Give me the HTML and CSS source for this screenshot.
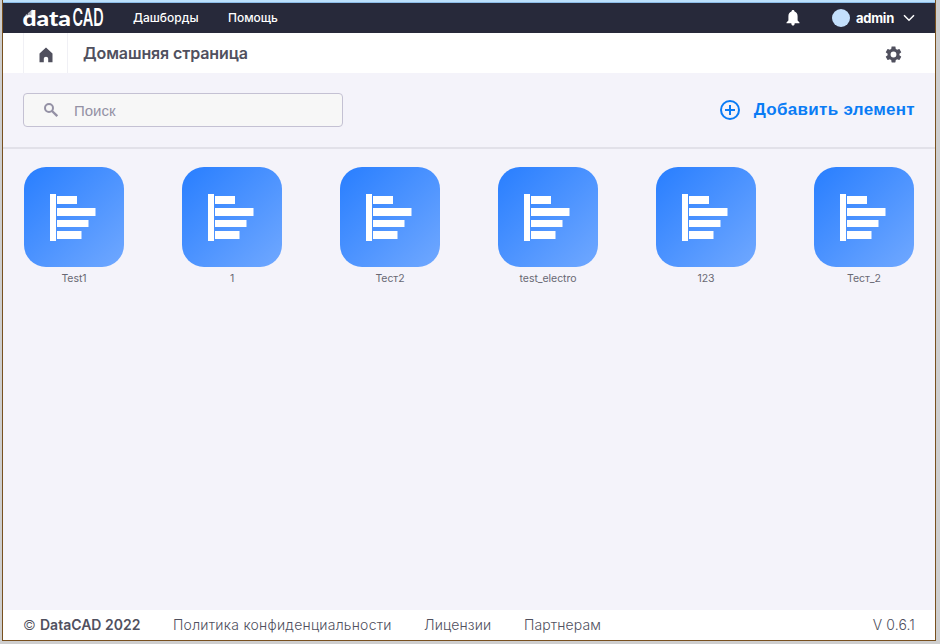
FILE: index.html
```html
<!DOCTYPE html>
<html lang="ru">
<head>
<meta charset="utf-8">
<title>DataCAD</title>
<link rel="stylesheet" href="styles.css">
</head>
<body>
<svg width="0" height="0" class="defs">
  <symbol id="chart" viewBox="0 0 100 100">
    <path fill="#fff" d="M26 27h6v47h-6zM33 29h20v8H33zM33 41h38.500v8H33zM33 53h31.500v7H33zM33 64h24.500v8H33z"/>
  </symbol>
</svg>
<div class="window">
  <div class="strip"></div>
  <header class="topbar">
    <svg class="logo" width="84" height="24" viewBox="0 0 84 24">
      <path d="M2.500 9 4.500 7.500V11h-2zM5 7 7 5.500V10H5z" fill="#a9abb5"/>
      <path d="M7.200 5.200 9.500 3.500V10H7.200z" fill="#d5d6dc"/>
      <text class="logo-data" x="-.5" y="19.500" textLength="48.500" lengthAdjust="spacingAndGlyphs">data</text>
      <text class="logo-cad" transform="translate(49.500 19.500) scale(.52 1)" textLength="60" lengthAdjust="spacingAndGlyphs">CAD</text>
    </svg>
    <nav class="nav"><a class="nav-dash">Дашборды</a><a class="nav-help">Помощь</a></nav>
    <div class="user">
      <svg class="bell" width="14" height="16" viewBox="0 0 14 16"><path fill="#fff" d="M7 0c1 0 1.500.7 1.500 1.600C10.600 2.200 11.600 4 11.600 6.200V10.500L13.500 12.500V13.300H.5V12.500L2.400 10.500V6.200C2.400 4 3.400 2.200 5.500 1.600 5.500.7 6 0 7 0ZM5.300 13.300H8.700C8.700 14.900 8 15.600 7 15.600S5.300 14.900 5.300 13.300Z"/></svg>
      <span class="avatar"></span>
      <span class="username">admin</span>
      <svg class="chevron" width="12" height="8" viewBox="0 0 12 8"><path d="M1 1.200 6 6.200 11 1.200" fill="none" stroke="#fff" stroke-width="1.500"/></svg>
    </div>
  </header>
  <div class="titlebar">
    <a class="home"><svg width="14" height="16" viewBox="0 0 14 16"><path fill="#50505e" d="M7 .5 13.500 6.500V15.200H9.200V11.500Q9.200 9.800 7 9.800T4.800 11.500V15.200H.5V6.500Z"/></svg></a>
    <h1 class="title">Домашняя страница</h1>
    <svg class="gear" width="19" height="19" viewBox="0 0 24 24"><path fill="#50505e" d="M19.430 12.980c.04-.32.070-.64.070-.98s-.03-.66-.07-.98l2.110-1.650c.19-.15.240-.42.120-.64l-2-3.460c-.12-.22-.39-.3-.61-.22l-2.490 1c-.52-.4-1.080-.73-1.690-.98l-.38-2.650C14.460 2.180 14.250 2 14 2h-4c-.25 0-.46.180-.49.420l-.38 2.650c-.61.250-1.170.590-1.690.98l-2.490-1c-.23-.09-.49 0-.61.220l-2 3.460c-.13.220-.07.490.12.640l2.110 1.650c-.04.320-.07.650-.07.980s.03.660.07.980l-2.110 1.650c-.19.150-.24.420-.12.640l2 3.460c.12.220.39.300.61.220l2.490-1c.52.400 1.080.730 1.690.980l.38 2.650c.03.240.24.420.49.420h4c.25 0 .46-.18.490-.42l.38-2.650c.61-.25 1.170-.59 1.690-.98l2.490 1c.23.090.49 0 .61-.22l2-3.460c.12-.22.070-.49-.12-.64zM12 15.700A3.700 3.700 0 1 1 12 8.300a3.700 3.700 0 0 1 0 7.400z"/></svg>
  </div>
  <div class="tools">
    <label class="search">
      <svg width="16" height="16" viewBox="0 0 16 16"><circle cx="6" cy="6" r="4" fill="none" stroke="#9491a5" stroke-width="2"/><path d="M9 9 14.300 14.200" stroke="#9491a5" stroke-width="2.400"/></svg>
      <input class="search-input" placeholder="Поиск">
    </label>
    <a class="add"><svg width="22" height="22" viewBox="0 0 22 22"><g fill="none" stroke="#0a7cf5" stroke-width="2"><circle cx="11" cy="11" r="9"/><path d="M11 6v10M6 11h10"/></g></svg><span>Добавить элемент</span></a>
  </div>
  <main class="grid">
    <a class="item"><svg class="tile"><use href="#chart"/></svg><span class="label">Test1</span></a>
    <a class="item"><svg class="tile"><use href="#chart"/></svg><span class="label">1</span></a>
    <a class="item"><svg class="tile"><use href="#chart"/></svg><span class="label">Тест2</span></a>
    <a class="item"><svg class="tile"><use href="#chart"/></svg><span class="label">test_electro</span></a>
    <a class="item"><svg class="tile"><use href="#chart"/></svg><span class="label">123</span></a>
    <a class="item"><svg class="tile"><use href="#chart"/></svg><span class="label">Тест_2</span></a>
  </main>
  <footer class="footer">
    <span class="copy">© <b>DataCAD 2022</b></span>
    <a class="policy">Политика конфиденциальности</a>
    <a class="licenses">Лицензии</a>
    <a class="partners">Партнерам</a>
    <span class="version">V 0.6.1</span>
  </footer>
</div>
</body>
</html>
```
FILE: styles.css
```css
* { box-sizing: border-box; }
body { margin: 0; height: 644px; overflow: hidden; background: #cecece; font-family: Inter, "Open Sans", sans-serif; color: #50505e; }
.defs { display: block; }
.window { width: 934px; height: 641px; margin-left: 2px; border: 1px solid #78501e; border-top: 0; background: #f4f3fa; display: flex; flex-direction: column; }
.strip { height: 3px; flex: none; background: #bce0fb; border-bottom: 1px solid #8cbce8; }
.topbar { height: 30px; flex: none; background: #27293a; display: flex; align-items: center; padding: 0 20px; color: #fff; }
.logo { flex: none; overflow: visible; }
.logo text { fill: #fff; }
.logo-data { font: 900 20px Lato, sans-serif; }
.logo-cad { font: 600 24px Inter, sans-serif; }
.nav { display: flex; margin-left: 26px; font-size: 12px; font-weight: 500; padding-bottom: 1px; }
.nav a { white-space: nowrap; }
.nav-dash { width: 95px; }
.user { margin-left: auto; display: flex; align-items: center; }
.bell { margin-right: 32px; }
.avatar { width: 18px; height: 18px; border-radius: 50%; background: #c3dffc; }
.username { width: 47px; margin-left: 6px; font-size: 13px; font-weight: 700; letter-spacing: -.25px; }
.titlebar { height: 40px; flex: none; background: #fff; display: flex; align-items: center; padding: 0 32px 0 20px; }
.home { width: 45px; height: 40px; border: 1px solid #f0f0f5; border-width: 0 1px; display: flex; align-items: center; justify-content: center; padding: 3px 0 0; }
.title { margin: 0 0 0 15px; font-size: 16px; font-weight: 600; line-height: 20px; letter-spacing: -.1px; }
.gear { margin: 2px 0 0 auto; }
.tools { height: 76px; flex: none; padding: 20px 20px 0; display: flex; align-items: flex-start; justify-content: space-between; border-bottom: 2px solid #e2e1e9; }
.search { width: 320px; height: 34px; border: 1px solid #c4c1d3; border-radius: 4px; background: #f7f7f7; display: flex; align-items: center; padding-left: 19px; }
.search-input { width: 240px; margin-left: 15px; border: 0; padding: 0; outline: 0; background: none; font: 15px "Liberation Sans", Arial, sans-serif; }
.search-input::placeholder { color: #9491a5; opacity: 1; }
.add { display: flex; align-items: center; height: 34px; gap: 13px; color: #0a7cf5; font: 700 17px "Liberation Sans", Arial, sans-serif; letter-spacing: .3px; }
.grid { flex: 1; display: flex; justify-content: space-between; align-items: flex-start; padding: 18px 21px 0; }
.item { width: 100px; display: flex; flex-direction: column; align-items: center; }
.tile { width: 100px; height: 100px; border-radius: 22px; background: linear-gradient(135deg, #287eff, #70a8ff); }
.label { margin-top: 5px; font-size: 10.500px; line-height: 14px; letter-spacing: -.05px; color: #686873; white-space: nowrap; }
.footer { height: 30px; flex: none; background: #fff; display: flex; align-items: center; padding: 0 20px 1px; font-size: 14px; font-weight: 300; letter-spacing: .12px; white-space: nowrap; }
.footer b { font-weight: 600; letter-spacing: 0; }
.copy { width: 150px; }
.policy { width: 251px; letter-spacing: .24px; }
.licenses { width: 100px; }
.version { margin-left: auto; }
```
